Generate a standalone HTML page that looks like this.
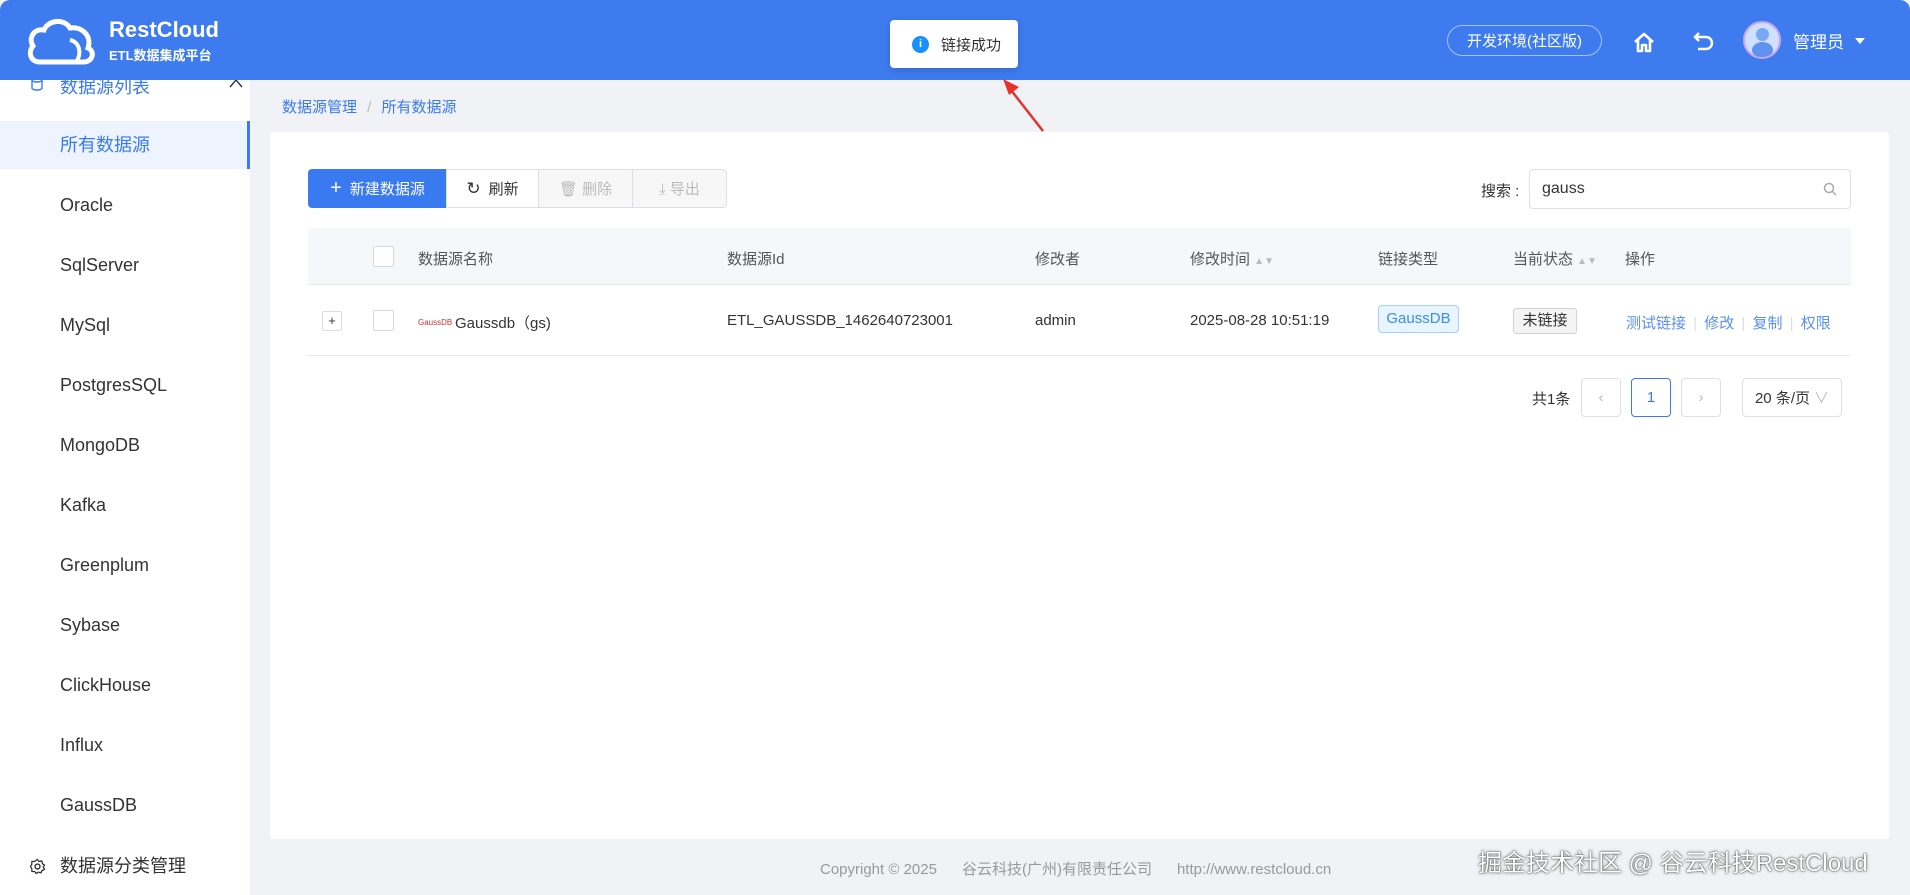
<!DOCTYPE html>
<html><head><meta charset="utf-8">
<style>
*{box-sizing:border-box;margin:0;padding:0}
body{width:1910px;height:895px;overflow:hidden;background:#f0f2f5;font-family:"Liberation Sans","Noto Sans CJK SC",sans-serif;color:#333;position:relative;font-size:16px}
.abs{position:absolute}
.hdr{left:0;top:0;width:1910px;height:80px;background:#3d7bef;border-radius:10px 10px 0 0}
.side{left:0;top:80px;width:250px;height:815px;background:#fff}
.si{position:absolute;left:60px;font-size:18px;color:#333;line-height:24px}
.card{left:270px;top:132px;width:1619px;height:707px;background:#fff;border-radius:3px}
.btn{position:absolute;top:169px;height:39px;border:1px solid #dcdfe6;background:#fff;font-size:15px;display:flex;align-items:center;justify-content:center;gap:8px}
.th{position:absolute;top:248px;font-size:15px;color:#555}
.td{position:absolute;top:312px;font-size:15px;color:#333}
.cb{position:absolute;width:21px;height:21px;border:1px solid #d9d9d9;border-radius:2px;background:#fff}
.pg{position:absolute;top:378px;height:39px;border:1px solid #dcdfe6;border-radius:4px;display:flex;align-items:center;justify-content:center;font-size:15px;color:#bbb}
.lk{color:#5b8ff0}
</style></head><body>
<div class="abs hdr"></div>
<svg class="abs" style="left:26px;top:16px" width="76" height="50" viewBox="0 0 76 50"><path d="M14 46 C4 46 2 36 7 30 C2 22 8 12 18 14 C22 4 38 2 44 12 C56 10 66 20 62 32 C70 36 66 46 58 46 Z" fill="none" stroke="#fff" stroke-width="5"/><path d="M44 24 C54 26 56 38 50 46" fill="none" stroke="#fff" stroke-width="4"/></svg>
<div class="abs" style="left:109px;top:17px;color:#fff;font-size:22px;font-weight:bold">RestCloud</div>
<div class="abs" style="left:109px;top:45px;color:#fff;font-size:13px;font-weight:bold">ETL数据集成平台</div>
<div class="abs" style="left:890px;top:20px;width:128px;height:48px;background:#fff;border-radius:4px;box-shadow:0 2px 8px rgba(0,0,0,.15);display:flex;align-items:center;padding-left:22px;gap:12px;font-size:15px">
<span style="width:17px;height:17px;border-radius:50%;background:#1890ff;color:#fff;font-size:11px;display:flex;align-items:center;justify-content:center;font-weight:bold">i</span>链接成功</div>
<div class="abs" style="left:1447px;top:25px;width:155px;height:31px;border:1px solid rgba(255,255,255,.55);border-radius:16px;color:#fff;font-size:15px;display:flex;align-items:center;justify-content:center">开发环境(社区版)</div>
<svg class="abs" style="left:1632px;top:30px" width="24" height="24" viewBox="0 0 24 24"><path d="M3 12 L12 4 L21 12 M6 10 V21 H10 V15 H14 V21 H18 V10" fill="none" stroke="#fff" stroke-width="2.6" stroke-linejoin="round"/></svg>
<svg class="abs" style="left:1692px;top:30px" width="24" height="24" viewBox="0 0 24 24"><path d="M7 3 L3 7 L7 11 M3 7 H14 A6 6 0 0 1 14 19 H6" fill="none" stroke="#fff" stroke-width="2.4"/></svg>
<div class="abs" style="left:1743px;top:21px;width:38px;height:38px;border-radius:50%;background:#cfe0ff;border:2px solid #c8a6f5;overflow:hidden"><div class="abs" style="left:11px;top:5px;width:13px;height:13px;border-radius:50%;background:#7aa7f2"></div><div class="abs" style="left:7px;top:19px;width:21px;height:16px;border-radius:50%;background:#5d92ef"></div></div>
<div class="abs" style="left:1793px;top:28px;color:#fff;font-size:17px">管理员</div>
<div class="abs" style="left:1855px;top:38px;border:5px solid transparent;border-top:6px solid #fff"></div>
<svg class="abs" style="left:995px;top:75px" width="60" height="62"><line x1="48" y1="56" x2="12" y2="10" stroke="#e8312a" stroke-width="2.5"/><path d="M8 4 L24 12 L14 20 Z" fill="#e8312a"/></svg>
<div class="abs side"></div>
<div class="abs" style="left:0;top:80px;width:250px;height:26px;overflow:hidden">
<div class="abs" style="left:60px;top:-7px;color:#3a7af0;font-size:18px">数据源列表</div>
<svg class="abs" style="left:30px;top:-3px" width="14" height="14"><ellipse cx="7" cy="3" rx="5" ry="2" fill="none" stroke="#3a7af0" stroke-width="1.4"/><path d="M2 3 V11 A5 2 0 0 0 12 11 V3" fill="none" stroke="#3a7af0" stroke-width="1.4"/></svg>
<svg class="abs" style="left:228px;top:-2px" width="16" height="10"><path d="M2 9 L8 2 L14 9" fill="none" stroke="#333" stroke-width="1.4"/></svg>
</div>
<div class="abs" style="left:0;top:121px;width:250px;height:48px;background:#eef4fe;border-right:3px solid #3a7af0"></div>
<div class="si" style="top:133px;color:#3a7af0">所有数据源</div>
<div class="si" style="top:193px">Oracle</div>
<div class="si" style="top:253px">SqlServer</div>
<div class="si" style="top:313px">MySql</div>
<div class="si" style="top:373px">PostgresSQL</div>
<div class="si" style="top:433px">MongoDB</div>
<div class="si" style="top:493px">Kafka</div>
<div class="si" style="top:553px">Greenplum</div>
<div class="si" style="top:613px">Sybase</div>
<div class="si" style="top:673px">ClickHouse</div>
<div class="si" style="top:733px">Influx</div>
<div class="si" style="top:793px">GaussDB</div>
<svg class="abs" style="left:29px;top:858px" width="17" height="17" viewBox="0 0 24 24"><circle cx="12" cy="12" r="3.5" fill="none" stroke="#333" stroke-width="2"/><path d="M12 2 L14 5 L18 4 L19 8 L22 10 L20 13 L22 16 L18 18 L17 21 L13 20 L10 22 L8 19 L4 19 L4 15 L2 12 L4 9 L4 5 L8 5 Z" fill="none" stroke="#333" stroke-width="1.8" stroke-linejoin="round"/></svg>
<div class="si" style="top:854px">数据源分类管理</div>
<div class="abs" style="left:282px;top:96px;font-size:15px;color:#3a7af0">数据源管理 <span style="color:#bbb;margin:0 6px">/</span> 所有数据源</div>
<div class="abs card"></div>
<div class="btn" style="left:308px;width:139px;background:#3a7af0;border-color:#3a7af0;color:#fff;border-radius:4px 0 0 4px"><span style="font-size:20px;font-weight:300">+</span>新建数据源</div>
<div class="btn" style="left:446px;width:93px;color:#333"><span style="font-size:17px">↻</span>刷新</div>
<div class="btn" style="left:538px;width:95px;color:#bbb;background:#f7f7f7">🗑&#xFE0E; 删除</div>
<div class="btn" style="left:632px;width:95px;color:#bbb;background:#f7f7f7;border-radius:0 4px 4px 0">⤓ 导出</div>
<div class="abs" style="left:1481px;top:180px;font-size:15px">搜索 :</div>
<div class="abs" style="left:1529px;top:169px;width:322px;height:40px;border:1px solid #dcdfe6;border-radius:4px;padding:10px 12px;font-size:16px">gauss</div>
<svg class="abs" style="left:1823px;top:182px" width="14" height="14"><circle cx="6" cy="6" r="4.5" fill="none" stroke="#aaa" stroke-width="1.5"/><line x1="9.5" y1="9.5" x2="13" y2="13" stroke="#aaa" stroke-width="1.5"/></svg>
<div class="abs" style="left:308px;top:228px;width:1543px;height:57px;background:#f5f7fa;border-bottom:1px solid #e8e8e8"></div>
<div class="abs" style="left:308px;top:355px;width:1543px;height:1px;background:#e8e8e8"></div>
<div class="cb" style="left:373px;top:246px"></div>
<div class="th" style="left:418px">数据源名称</div>
<div class="th" style="left:727px">数据源Id</div>
<div class="th" style="left:1035px">修改者</div>
<div class="th" style="left:1190px">修改时间 <span style="color:#bbb;font-size:10px">▲▼</span></div>
<div class="th" style="left:1378px">链接类型</div>
<div class="th" style="left:1513px">当前状态 <span style="color:#bbb;font-size:10px">▲▼</span></div>
<div class="th" style="left:1625px">操作</div>
<div class="abs" style="left:322px;top:311px;width:20px;height:20px;border:1px solid #ddd;border-radius:2px;font-size:13px;text-align:center;line-height:18px">+</div>
<div class="cb" style="left:373px;top:310px"></div>
<div class="abs" style="left:418px;top:318px;font-size:8px;color:#c33">GaussDB</div>
<div class="td" style="left:455px">Gaussdb（gs)</div>
<div class="td" style="left:727px">ETL_GAUSSDB_1462640723001</div>
<div class="td" style="left:1035px">admin</div>
<div class="td" style="left:1190px">2025-08-28 10:51:19</div>
<div class="abs" style="left:1378px;top:305px;width:81px;height:28px;background:#e8f4ff;border:1px solid #a3d0fd;border-radius:4px;color:#3a8ee6;font-size:15px;text-align:center;line-height:26px">GaussDB</div>
<div class="abs" style="left:1513px;top:308px;width:64px;height:26px;background:#f4f4f5;border:1px solid #d3d3d6;border-radius:3px;font-size:15px;text-align:center;line-height:24px">未链接</div>
<div class="td lk" style="left:1626px">测试链接 <span style="color:#ddd;margin:0 3px">|</span> 修改 <span style="color:#ddd;margin:0 3px">|</span> 复制 <span style="color:#ddd;margin:0 3px">|</span> 权限</div>
<div class="abs" style="left:1532px;top:388px;font-size:15px">共1条</div>
<div class="pg" style="left:1581px;width:40px">‹</div>
<div class="pg" style="left:1631px;width:40px;border-color:#3a7af0;color:#3a7af0">1</div>
<div class="pg" style="left:1681px;width:40px">›</div>
<div class="pg" style="left:1742px;width:100px;color:#333">20 条/页<span style="color:#bbb;margin-left:4px">∨</span></div>
<div class="abs" style="left:820px;top:858px;font-size:15px;color:#999">Copyright © 2025 &nbsp;&nbsp;&nbsp;&nbsp; 谷云科技(广州)有限责任公司 &nbsp;&nbsp;&nbsp;&nbsp; http://www.restcloud.cn</div>
<div class="abs" style="left:1478px;top:843px;font-size:24px;color:#fff;text-shadow:0 0 3px rgba(0,0,0,.6),0 0 1px #000">掘金技术社区 @ 谷云科技RestCloud</div>
</body></html>
